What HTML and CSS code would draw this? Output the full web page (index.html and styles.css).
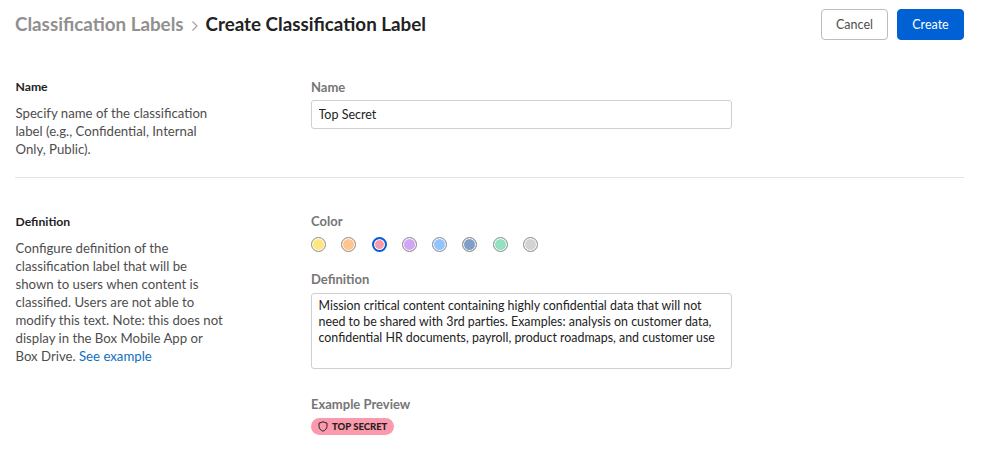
FILE: index.html
```
<!DOCTYPE html>
<html lang="en">
<head>
<meta charset="utf-8">
<title>Create Classification Label</title>
<link rel="stylesheet" href="styles.css">
</head>
<body>
<header class="header">
  <h1 class="crumbs">
    <span class="crumb-parent">Classification Labels</span>
    <svg class="crumb-sep" width="8" height="12" viewBox="0 0 8 12"><path d="M1.500 1.500 6 6l-4.500 4.500" fill="none" stroke="#a3a3a3" stroke-width="1.200"/></svg>
    <span class="crumb-current">Create Classification Label</span>
  </h1>
  <div class="actions">
    <button class="btn btn-cancel">Cancel</button>
    <button class="btn btn-primary">Create</button>
  </div>
</header>
<main>
  <section class="section section-name">
    <div class="intro">
      <h2 class="intro-title">Name</h2>
      <p class="intro-text">Specify name of the classification label (e.g., Confidential, Internal Only, Public).</p>
    </div>
    <div class="fields">
      <label class="field-label">Name</label>
      <input class="input" type="text" value="Top Secret">
    </div>
  </section>
  <section class="section section-def">
    <div class="intro">
      <h2 class="intro-title">Definition</h2>
      <p class="intro-text intro-wide">Configure definition of the classification label that will be shown to users when content is classified. Users are not able to modify this text. Note: this does not display in the Box Mobile App or Box Drive. <a class="link" href="#">See example</a></p>
    </div>
    <div class="fields">
      <div class="field-label">Color</div>
      <div class="swatches">
        <span class="swatch c-yellow"></span>
        <span class="swatch c-orange"></span>
        <span class="swatch c-red selected"></span>
        <span class="swatch c-purple"></span>
        <span class="swatch c-blue"></span>
        <span class="swatch c-navy"></span>
        <span class="swatch c-green"></span>
        <span class="swatch c-gray"></span>
      </div>
      <label class="field-label def-label">Definition</label>
      <div class="textarea">Mission critical content containing highly confidential data that will not need to be shared with 3rd parties. Examples: analysis on customer data, confidential HR documents, payroll, product roadmaps, and customer use</div>
      <div class="field-label preview-label">Example Preview</div>
      <span class="badge">
        <svg width="10" height="11" viewBox="0 0 10 11"><path d="M5 .8 9 2.200v3c0 2.400-1.700 4-4 5-2.300-1-4-2.600-4-5v-3z" fill="none" stroke="#222" stroke-width="1"/></svg>
        TOP SECRET
      </span>
    </div>
  </section>
</main>
</body>
</html>
```
FILE: styles.css
```
* { box-sizing: border-box; }
html, body { margin: 0; padding: 0; }
body {
  width: 982px;
  height: 454px;
  overflow: hidden;
  background: #fff;
  color: #222;
  font-family: Lato, sans-serif;
  font-size: 13px;
}
.header {
  display: flex;
  justify-content: space-between;
  align-items: flex-start;
  padding: 9px 18px 0 15px;
  height: 40px;
}
.crumbs {
  display: flex;
  align-items: center;
  gap: 7px;
  margin: 0;
  font-size: 18.800px;
  font-weight: 700;
  line-height: 30px;
}
.crumb-parent { color: #909090; }
.crumb-current { color: #222; }
.crumb-sep { margin-top: 3px; }
.actions { display: flex; gap: 9px; }
.btn {
  height: 31px;
  border-radius: 4px;
  font-family: Lato, sans-serif;
  font-size: 12.500px;
  padding: 0;
}
.btn-cancel { width: 67px; background: #fff; border: 1px solid #bcbcbc; color: #4e4e4e; }
.btn-primary { width: 67px; background: #0061d5; border: 1px solid #0061d5; color: #fff; }
.section {
  display: flex;
  margin: 0 18px 0 15px;
}
.section-name {
  padding-top: 38px;
  height: 138px;
  border-bottom: 1px solid #e4e4e4;
}
.section-def { padding-top: 35px; }
.intro { width: 296px; padding-left: 0.500px; }
.intro-title {
  margin: 0;
  font-size: 12.200px;
  font-weight: 700;
  line-height: 18px;
  color: #222;
}
.intro-text {
  margin: 8px 0 0;
  width: 200px;
  font-size: 13.200px;
  line-height: 18px;
  color: #4e4e4e;
}
.intro-wide { width: 212px; margin-top: 8px; }
.link { color: #0e6fc0; text-decoration: none; }
.fields { width: 421px; display: flex; flex-direction: column; align-items: flex-start; }
.field-label {
  font-size: 13px;
  font-weight: 700;
  line-height: 18px;
  color: #767676;
}
.section-def .fields { margin-top: -1px; }
.input {
  margin-top: 4px;
  width: 421px;
  height: 29px;
  border: 1px solid #cfcfcf;
  border-radius: 3px;
  padding: 0 6.500px;
  font-family: Lato, sans-serif;
  font-size: 12.500px;
  color: #222;
}
.swatches { display: flex; gap: 15.300px; margin-top: 7px; }
.swatch {
  width: 15px;
  height: 15px;
  border-radius: 50%;
  border: 1px solid #8f8f8f;
  box-shadow: inset 0 0 0 1px #fff;
}
.swatch.selected { border: 2px solid #0061d5; }
.c-yellow { background: #ffe680; }
.c-orange { background: #ffc58f; }
.c-red { background: #fb9aac; }
.c-purple { background: #d3a5f5; }
.c-blue { background: #94c4ff; }
.c-navy { background: #7f9fc7; }
.c-green { background: #94e0c0; }
.c-gray { background: #d3d3d3; }
.def-label { margin-top: 18px; }
.textarea {
  margin-top: 5px;
  width: 421px;
  height: 76px;
  border: 1px solid #cfcfcf;
  border-radius: 3px;
  padding: 4px 6.500px;
  font-size: 12.400px;
  line-height: 16px;
  color: #222;
}
.preview-label { margin-top: 26px; }
.badge {
  display: inline-flex;
  align-items: center;
  gap: 4px;
  margin-top: 5px;
  height: 17px;
  padding: 0 7px 0 7px;
  border-radius: 9px;
  background: #fb9aac;
  font-size: 9.500px;
  font-weight: 900;
  color: #222;
}
```
